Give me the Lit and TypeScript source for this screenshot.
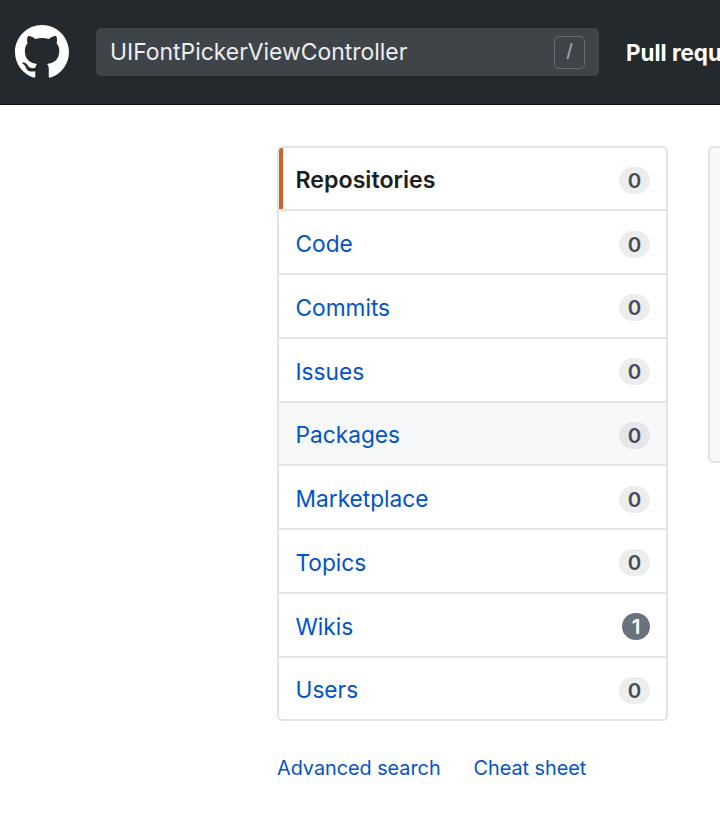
import { LitElement, html, css } from "lit";
import { customElement } from "lit/decorators.js";

const items: [string, number][] = [
  ["Repositories", 0], ["Code", 0], ["Commits", 0], ["Issues", 0], ["Packages", 0],
  ["Marketplace", 0], ["Topics", 0], ["Wikis", 1], ["Users", 0],
];

@customElement("app-root")
export class AppRoot extends LitElement {
  static styles = css`
    :host { display: block; width: 720px; height: 815px; overflow: hidden; background: #fff;
      font-family: Inter, "Liberation Sans", sans-serif; color: #24292e; }
    .head { height: 104px; box-sizing: content-box; background: #24292e; border-bottom: 1px solid #0f1216;
      display: flex; align-items: center; padding-left: 15px; white-space: nowrap; overflow: hidden; }
    .logo { width: 54px; height: 54px; fill: #fff; flex: none; }
    .search { width: 503px; height: 48px; margin-left: 27px; flex: none; box-sizing: border-box;
      background: #3f4448; border-radius: 5px; display: flex; align-items: center;
      justify-content: space-between; padding: 0 14px 0 14px; color: #eceef0; font-size: 22.9px; }
    .slash { width: 31px; height: 33px; box-sizing: border-box; border: 1.5px solid #666c71; border-radius: 5px;
      display: flex; align-items: center; justify-content: center; color: #a5a9ad; font-size: 22px; font-weight: 300;
      font-family: "Liberation Sans", sans-serif; }
    .nav { margin-left: 27px; color: #fff; font-weight: 700; font-size: 22.4px; flex: none; }
    .main { display: flex; gap: 40px; padding: 41px 0 0 277px; align-items: flex-start; }
    .col { width: 391px; flex: none; }
    .menu { border: 2px solid #e1e4e8; border-radius: 5px; display: flex; flex-direction: column; overflow: hidden; }
    .row { height: 63.75px; box-sizing: border-box; display: flex; align-items: center; justify-content: space-between;
      padding: 0 16px 0 16.5px; font-size: 22.7px; color: #0353c8; border-top: 2px solid #e1e4e8; position: relative; }
    .row:first-child { border-top: none; height: 61.3px; }
    .label { margin-top: 3px; }
    .row.active { color: #1b1f23; font-weight: 600; font-size: 23.2px; }
    .row.active::before { content: ""; position: absolute; left: 0; top: 0; bottom: 0; width: 4px; background: #d1622c; }
    .row.hover { background: #f6f8fa; }
    .count { min-width: 31px; height: 27px; border-radius: 14px; box-sizing: border-box; background: rgba(27,31,35,.08);
      display: flex; align-items: center; justify-content: center; color: #444d56; font-size: 20.5px; font-weight: 600; margin-top: 4px; }
    .count.on { min-width: 28px; background: #6a737d; color: #fff; }
    .links { display: flex; gap: 33px; margin-top: 35px; font-size: 19.8px; color: #0353c8; }
    .panel { width: 100px; height: 317px; flex: none; box-sizing: border-box; background: #f6f8fa;
      border: 2px solid #e1e4e8; border-radius: 5px; }
  `;

  render() {
    return html`
      <div class="head">
        <svg class="logo" viewBox="0 0 16 16"><path fill-rule="evenodd" d="M8 0C3.58 0 0 3.58 0 8c0 3.54 2.29 6.53 5.47 7.59.4.07.55-.17.55-.38 0-.19-.01-.82-.01-1.49-2.01.37-2.53-.49-2.69-.94-.09-.23-.48-.94-.82-1.13-.28-.15-.68-.52-.01-.53.63-.01 1.08.58 1.23.82.72 1.21 1.87.87 2.33.66.07-.52.28-.87.51-1.07-1.78-.2-3.64-.89-3.64-3.95 0-.87.31-1.59.82-2.15-.08-.2-.36-1.02.08-2.12 0 0 .67-.21 2.2.82.64-.18 1.32-.27 2-.27.68 0 1.36.09 2 .27 1.53-1.04 2.2-.82 2.2-.82.44 1.1.16 1.92.08 2.12.51.56.82 1.27.82 2.15 0 3.07-1.87 3.75-3.65 3.95.29.25.54.73.54 1.48 0 1.07-.01 1.93-.01 2.2 0 .21.15.46.55.38A8.013 8.013 0 0016 8c0-4.42-3.58-8-8-8z"/></svg>
        <div class="search"><span>UIFontPickerViewController</span><span class="slash">/</span></div>
        <div class="nav">Pull requests</div>
      </div>
      <div class="main">
        <div class="col">
          <div class="menu">
            ${items.map(([n, c], i) => html`
              <div class="row ${i === 0 ? "active" : ""} ${n === "Packages" ? "hover" : ""}">
                <span class="label">${n}</span><span class="count ${c ? "on" : ""}">${c}</span>
              </div>`)}
          </div>
          <div class="links"><span>Advanced search</span><span>Cheat sheet</span></div>
        </div>
        <div class="panel"></div>
      </div>
    `;
  }
}
